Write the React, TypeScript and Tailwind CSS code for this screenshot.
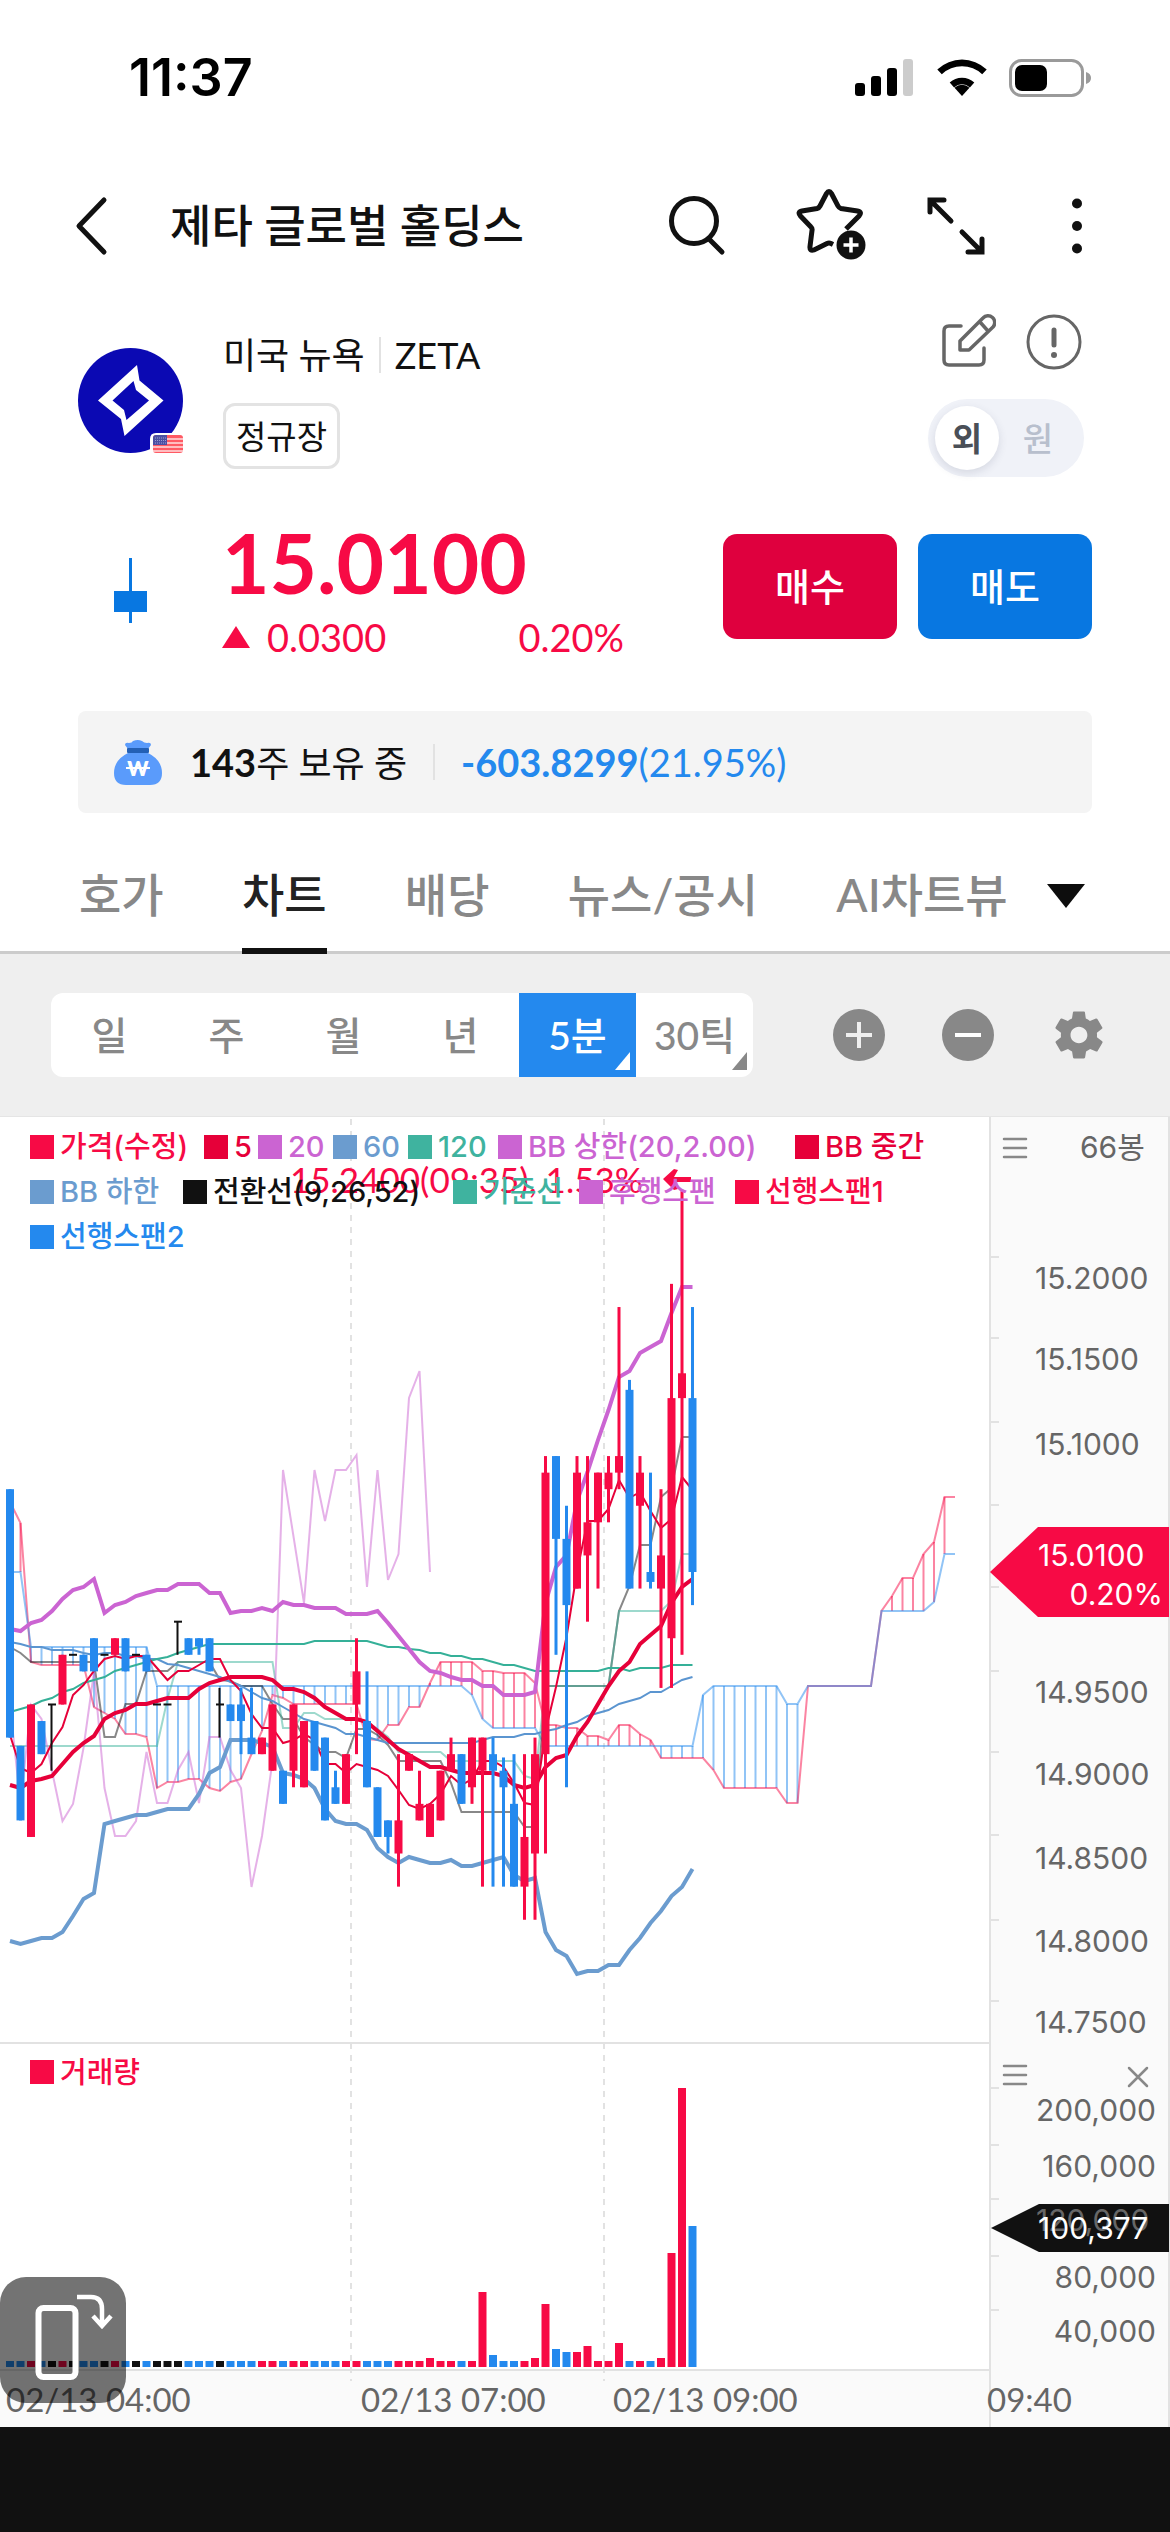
import { useState } from 'react';
import { IoMdSettings } from 'react-icons/io';

const RED = '#f70a45';
const BLUE = '#2489ee';
const BLACK = '#111111';

const STEP = 10.5;
const X0 = 10;

const xOf = (i: number) => X0 + i * STEP;
// 1센트 = 16.56px, 15.01달러 = 455px
const yOf = (cents: number) => 455 - (cents - 1501) * 16.56;

// [색, 고가, 몸통 상단, 몸통 하단, 저가] (센트)
type Candle = [string, number, number, number, number];

const candles: Candle[] = [
  ['b', 1506, 1506, 1491, 1491],
  ['b', 1490.5, 1490.5, 1486, 1486],
  ['r', 1493, 1493, 1485, 1485],
  ['b', 1492, 1492, 1490, 1490],
  ['k', 1493, 1493, 1493, 1489],
  ['r', 1496, 1496, 1493, 1493],
  ['k', 1496, 1496, 1496, 1496],
  ['b', 1496, 1496, 1495, 1495],
  ['b', 1497, 1497, 1495, 1495],
  ['k', 1496, 1496, 1496, 1496],
  ['r', 1497, 1497, 1496, 1496],
  ['b', 1497, 1497, 1495, 1495],
  ['k', 1496, 1496, 1496, 1496],
  ['b', 1496, 1496, 1495, 1495],
  ['k', 1493, 1493, 1493, 1493],
  ['k', 1493, 1493, 1493, 1493],
  ['k', 1498, 1498, 1498, 1496],
  ['b', 1497, 1497, 1496, 1496],
  ['b', 1497, 1497, 1496.5, 1496],
  ['b', 1497, 1497, 1495, 1495],
  ['k', 1494, 1493, 1493, 1491],
  ['b', 1493, 1493, 1492, 1492],
  ['b', 1494, 1493, 1492, 1490],
  ['b', 1494, 1491, 1490, 1490],
  ['r', 1491, 1491, 1490, 1490],
  ['r', 1493, 1493, 1489, 1489],
  ['b', 1489, 1489, 1487, 1487],
  ['r', 1493, 1493, 1489, 1488],
  ['r', 1492, 1492, 1488, 1488],
  ['b', 1492, 1492, 1489, 1489],
  ['b', 1491, 1491, 1486, 1486],
  ['b', 1489, 1488, 1487, 1487],
  ['r', 1490, 1490, 1487, 1487],
  ['r', 1497, 1495, 1493, 1490],
  ['b', 1495, 1492, 1488, 1488],
  ['b', 1488, 1488, 1485, 1485],
  ['b', 1486, 1486, 1485, 1484],
  ['r', 1490, 1486, 1484, 1482],
  ['r', 1490, 1490, 1489, 1489],
  ['r', 1489, 1487, 1486, 1486],
  ['r', 1487, 1487, 1485, 1485],
  ['r', 1489, 1489, 1486, 1486],
  ['r', 1491, 1490, 1489, 1489],
  ['b', 1490, 1490, 1487, 1487],
  ['r', 1491, 1491, 1488, 1487],
  ['r', 1491, 1491, 1489, 1482],
  ['b', 1491, 1490, 1489, 1482],
  ['b', 1489.8, 1489, 1488, 1482],
  ['b', 1490, 1487, 1482, 1482],
  ['r', 1490, 1485, 1482, 1480],
  ['r', 1491, 1490, 1484, 1480],
  ['r', 1508, 1507, 1490, 1484],
  ['b', 1508, 1508, 1503, 1496],
  ['b', 1505, 1503, 1499, 1488],
  ['r', 1508, 1507, 1500, 1500],
  ['r', 1508, 1504, 1502, 1498],
  ['r', 1507, 1507, 1504, 1500],
  ['r', 1508, 1507, 1506, 1504],
  ['r', 1517, 1508, 1507, 1506],
  ['b', 1512.6, 1512, 1500, 1500],
  ['r', 1508, 1507, 1505, 1500],
  ['b', 1507, 1501, 1500.4, 1500],
  ['r', 1506, 1502, 1500, 1494],
  ['r', 1518.4, 1511.5, 1497, 1494],
  ['r', 1524, 1513, 1511.5, 1496],
  ['b', 1517, 1511.5, 1501, 1499],
];

const candleColor: Record<string, string> = { r: RED, b: BLUE, k: BLACK };

// 기본 높이(6px)가 아닌 거래량 막대
const volumes: Record<number, number> = {
  40: 9, 45: 75, 46: 12, 50: 9, 51: 63, 52: 18, 53: 15, 54: 15, 55: 21,
  58: 24, 62: 9, 63: 114, 64: 279, 65: 141,
};

// "봉번호,y" 목록
const lines = {
  bbUpper:
    '0,512 1,514 2,506 3,503 4,494 5,482 6,473 7,470 8,462 9,496 10,488 11,485 12,479 13,476 14,473 15,473 16,467 18,467 19,476 20,476 21,496 22,494 23,494 24,491 25,494 26,485 27,488 28,488 29,491 31,491 32,497 34,497 35,494 36,506 37,519 38,532 39,545 40,554 41,556 42,560 43,563 44,563 45,569 46,569 47,578 49,578 50,575 51,486 52,450 53,438 54,384 55,355 56,323 57,293 58,260 59,254 60,236 61,230 62,224 63,196 64,170 65,170',
  bbMiddle:
    '0,668 1,671 2,664 3,662 4,659 5,647 6,635 7,626 8,619 9,602 10,596 11,593 12,587 13,587 14,584 15,581 17,581 18,572 19,566 20,563 21,560 24,560 25,563 26,572 27,572 28,575 29,581 30,590 31,596 32,602 33,602 34,605 35,614 36,623 37,632 38,638 39,644 40,650 41,650 42,653 43,656 46,656 47,659 48,668 49,671 50,668 51,650 52,641 53,638 54,619 55,605 56,587 57,569 58,554 59,545 60,527 61,518 62,509 63,486 64,470 65,462',
  bbLower:
    '0,824 1,827 2,824 3,821 4,821 5,815 6,799 7,782 8,776 9,707 10,704 11,701 12,698 13,698 14,695 15,692 17,692 18,677 19,656 20,650 21,623 23,623 24,626 25,630 26,656 27,658 28,662 29,671 30,692 31,704 32,707 33,707 34,713 35,731 36,740 37,746 38,740 39,743 40,746 41,746 42,743 43,749 44,749 45,746 46,743 47,740 48,758 49,764 50,761 51,815 52,833 53,839 54,857 55,854 56,854 57,848 58,848 59,833 60,821 61,806 62,794 63,779 64,770 65,752',
  ma5:
    '0,618 1,651 2,656 3,647 4,626 5,610 6,578 7,568 8,554 9,542 10,539 11,542 12,539 13,539 14,551 15,563 16,554 17,554 18,548 19,542 20,542 21,563 22,574 23,597 24,611 25,611 26,626 27,623 28,617 29,623 30,647 31,647 32,656 33,647 34,650 35,653 36,659 37,673 38,688 39,692 40,687 41,677 42,659 43,668 44,662 45,644 46,644 47,650 48,666 49,686 50,688 51,614 52,570 53,520 54,455 55,404 56,404 57,392 58,363 59,381 60,375 61,394 62,411 63,402 64,360 65,373',
  ma60:
    '0,525 1,527 2,530 3,530 4,533 6,533 7,536 8,538 9,536 10,536 11,539 12,539 13,542 14,542 15,547 16,548 17,551 18,554 19,557 20,560 21,565 22,569 23,575 24,581 25,584 26,590 27,596 28,602 29,605 30,608 31,611 32,617 33,617 34,620 35,623 36,626 44,626 45,623 46,620 48,620 49,617 50,617 51,614 52,612 53,608 54,605 55,599 56,596 57,593 58,587 59,584 60,581 61,575 62,575 63,569 64,563 65,560',
  ma120:
    '0,595 2,589 3,584 4,581 5,575 6,572 7,566 8,563 9,560 10,554 11,551 12,548 14,542 15,540 16,536 17,533 18,530 19,527 28,527 29,524 34,524 35,527 36,530 37,530 38,532 39,533 40,536 41,536 42,539 43,539 44,542 45,542 46,545 47,548 48,548 49,551 50,554 56,554 57,551 58,551 59,554 60,551 62,551 63,548 65,548',
  conversion:
    '0,530 1,536 2,545 8,545 9,620 10,620 11,587 12,587 13,554 15,554 16,545 19,545 20,563 21,564 22,569 24,569 25,587 26,602 27,602 28,620 29,628 30,635 31,635 32,641 33,612 34,612 35,618 36,628 37,644 41,644 42,666 43,695 48,695 49,710 50,710 51,569 57,569 58,494 59,469 60,428 61,428 62,380 63,371 64,320 65,320',
  base:
    '0,629 14,629 15,582 16,545 25,545 26,611 27,611 28,596 29,596 30,602 33,602 34,605 35,612 36,620 37,635 41,635 42,644 48,644 49,659 50,662 51,569 57,569 58,494 62,494 63,484 64,437 65,437',
  lagging:
    '0,588 1,687 2,588 3,602 4,654 5,704 6,687 7,631 8,555 9,671 10,719 11,719 12,704 13,635 14,686 15,686 16,653 17,635 18,686 19,620 20,620 21,653 22,671 23,770 24,719 25,644 26,353 28,486 29,353 30,404 31,353 32,353 33,338 34,470 35,353 36,463 37,437 38,281 39,254 40,455',
  spanA:
    '0,385 1,406 2,545 3,548 7,548 8,590 9,596 10,602 11,617 12,617 13,620 14,671 15,665 16,665 17,662 18,662 19,671 20,674 21,665 22,662 23,637 24,614 25,578 26,581 27,587 33,587 34,622 35,623 36,608 37,608 38,590 39,590 40,566 41,545 44,545 45,554 46,554 47,556 49,556 50,566 51,608 52,608 53,611 54,611 55,619 56,619 57,623 58,608 59,608 60,617 61,623 62,641 66,641 67,653 68,671 73,671 74,686 75,686 76,569 82,569 83,494 84,479 85,461 86,461 87,437 88,425 89,380 90,380',
  spanB:
    '0,455 1,455 2,530 13,530 14,569 43,569 44,578 45,602 46,611 50,611 51,629 65,629 66,578 67,569 73,569 74,587 75,587 76,569 82,569 83,494 87,494 88,485 89,437 90,437',
};

const parse = (s: string) => s.split(' ').map((p) => p.split(',').map(Number));
const toPoints = (s: string) => parse(s).map(([i, y]) => `${xOf(i)},${y}`).join(' ');

// 비어 있는 봉은 직선 보간
const valueAt = (s: string, i: number) => {
  const pts = parse(s);
  const next = pts.findIndex(([k]) => k >= i);
  if (pts[next][0] === i) return pts[next][1];
  const [k0, y0] = pts[next - 1];
  const [k1, y1] = pts[next];
  return y0 + ((y1 - y0) * (i - k0)) / (k1 - k0);
};

const cloud = Array.from({ length: 90 }, (_, i) => ({
  i,
  a: valueAt(lines.spanA, i),
  b: valueAt(lines.spanB, i),
}));

const priceTicks = [140, 221, 305, 388, 470, 554, 635, 718, 803, 884];
const priceLabels: [string, number][] = [
  ['15.2000', 161],
  ['15.1500', 242],
  ['15.1000', 327],
  ['14.9500', 575],
  ['14.9000', 657],
  ['14.8500', 741],
  ['14.8000', 824],
  ['14.7500', 905],
];
const volumeTicks = [971, 1028, 1082, 1139, 1193];
const volumeLabels: [string, number][] = [
  ['200,000', 993],
  ['160,000', 1049],
  ['80,000', 1160],
  ['40,000', 1214],
];

const legend = [
  [
    { label: '가격(수정)', color: 'text-[#f70a45]', width: 'w-[174px]' },
    { label: '5', color: 'text-[#e60039]', width: 'w-[54px]' },
    { label: '20', color: 'text-[#cb64d2]', width: 'w-[75px]' },
    { label: '60', color: 'text-[#6b9ccf]', width: 'w-[75px]' },
    { label: '120', color: 'text-[#3fb39f]', width: 'w-[90px]' },
    { label: 'BB 상한(20,2.00)', color: 'text-[#cb64d2]', width: 'w-[297px]' },
    { label: 'BB 중간', color: 'text-[#e60039]', width: 'w-[153px]' },
  ],
  [
    { label: 'BB 하한', color: 'text-[#6b9ccf]', width: 'w-[153px]' },
    { label: '전환선(9,26,52)', color: 'text-[#111111]', width: 'w-[270px]' },
    { label: '기준선', color: 'text-[#3fb39f]', width: 'w-[126px]' },
    { label: '후행스팬', color: 'text-[#cb64d2]', width: 'w-[156px]' },
    { label: '선행스팬1', color: 'text-[#f70a45]', width: 'w-[174px]' },
  ],
  [{ label: '선행스팬2', color: 'text-[#2489ee]', width: 'w-[174px]' }],
];

const tabs = ['호가', '차트', '배당', '뉴스/공시', 'AI차트뷰'];
const periods = ['일', '주', '월', '년', '5분', '30틱'];

function StatusBar() {
  return (
    <div className="flex h-[156px] items-center justify-between pr-[78px] pl-[129px]">
      <span className="font-['Inter',sans-serif] text-[52px] leading-none font-semibold text-black">11:37</span>
      <div className="flex items-center gap-[22px]">
        <svg className="h-[38px] w-[60px]" viewBox="0 0 60 38">
          <rect x="0" y="24" width="10" height="13" rx="3" />
          <rect x="16" y="17" width="10" height="20" rx="3" />
          <rect x="32" y="9" width="10" height="28" rx="3" />
          <rect x="48" y="0" width="10" height="37" rx="3" fill="#cccccc" />
        </svg>
        <svg className="h-[38px] w-[50px]" viewBox="0 0 50 38">
          <path d="M25 37l-7.5-8.2a11 11 0 0 1 15 0z" />
          <path d="M12.7 23.6a18 18 0 0 1 24.6 0l-4.4 4.8a11.6 11.6 0 0 0-15.8 0z" />
          <path d="M4.8 15.2L.3 10.4a36 36 0 0 1 49.4 0l-4.5 4.8a29.5 29.5 0 0 0-40.4 0z" />
        </svg>
        <svg className="h-[38px] w-[83px]" viewBox="0 0 83 38">
          <rect x="1.5" y="1.5" width="72" height="35" rx="11" fill="none" stroke="#9a9a9a" strokeWidth="3" />
          <rect x="6" y="6" width="32" height="26" rx="7" />
          <path d="M77 13q5 1.500 5 6t-5 6z" fill="#9a9a9a" />
        </svg>
      </div>
    </div>
  );
}

function Header() {
  return (
    <header className="flex h-[140px] items-center pr-[86px] pl-[72px]">
      <button aria-label="뒤로" className="mr-[62px]">
        <svg className="h-[60px] w-[36px]" viewBox="0 0 36 60" fill="none" stroke="#111" strokeWidth="5" strokeLinecap="round" strokeLinejoin="round">
          <path d="M32 4L7 30l25 26" />
        </svg>
      </button>
      <h1 className="flex-1 text-[45px] leading-[60px] font-medium text-[#111111]">제타 글로벌 홀딩스</h1>
      <div className="flex items-center gap-[54px]">
        <button aria-label="검색" className="mr-[15px]">
          <svg className="h-[70px] w-[60px]" viewBox="0 0 60 70" fill="none" stroke="#111" strokeWidth="5" strokeLinecap="round">
            <circle cx="27" cy="30" r="22.500" />
            <path d="M42 48l13 13" />
          </svg>
        </button>
        <button aria-label="관심종목 추가">
          <svg className="h-[76px] w-[76px]" viewBox="0 0 76 76" fill="none">
            <path
              d="M50 41l13-13q3.500-4-1.500-5l-16.500-2.500q-2-.5-3-2.500l-6.500-12.500q-2.500-4-5 0l-6.500 12.500q-1 2-3 2.500l-15 2.500q-5 1-1.500 5l10.500 11q1.500 1.500 1 3.500l-2 16q-.5 5 4 3.500l13-6.500q2-1 4 0l2 1"
              stroke="#111"
              strokeWidth="5"
            />
            <circle cx="55" cy="57" r="14.500" fill="#111" />
            <path d="M55 49.500v15M47.500 57h15" stroke="#fff" strokeWidth="3.500" />
          </svg>
        </button>
        <button aria-label="전체화면">
          <svg className="h-[70px] w-[60px]" viewBox="0 0 60 70" fill="none" stroke="#111" strokeWidth="5" strokeLinecap="round">
            <path d="M4 21V9h14M5 10l20 20M56 48v13H42M55 60L36 41" />
          </svg>
        </button>
        <button aria-label="더보기" className="ml-[30px]">
          <svg className="h-[60px] w-[14px]" viewBox="0 0 14 60" fill="#111">
            <circle cx="7" cy="7.500" r="5" />
            <circle cx="7" cy="30" r="5" />
            <circle cx="7" cy="52.500" r="5" />
          </svg>
        </button>
      </div>
    </header>
  );
}

function CompanyLogo() {
  return (
    <svg className="h-[108px] w-[106px]" viewBox="0 0 106 108">
      <circle cx="52.500" cy="52.500" r="52.500" fill="#0b09b3" />
      <path
        d="M20 52.500L59 17l2.500 15.500L85.500 52.500 46.500 88 43 71zM34.500 52.500L46 62l2.500 10L71 52.500 58 42l-2.500-9z"
        fill="#fff"
        fillRule="evenodd"
      />
      <path d="M72 108V91q0-6 6-6h28v23z" fill="#fff" />
      <g>
        <rect x="75" y="87" width="30" height="18" rx="3" fill="#ff5a64" />
        <path d="M75 91h30M75 95h30M75 99h30M75 103h30" stroke="#ffdede" strokeWidth="1.500" />
        <path d="M78 87h11v10H75v-7q0-3 3-3z" fill="#4b4fa3" />
        <path d="M77 90h11M77 92.500h11M77 95h11" stroke="#9a9cd0" strokeDasharray="1 1" />
      </g>
    </svg>
  );
}

function StockInfo() {
  const [currency, setCurrency] = useState('외');

  return (
    <section className="flex items-start px-[78px] pt-[18px]">
      <div className="mt-[34px] mr-[39px]">
        <CompanyLogo />
      </div>
      <div className="flex-1 pt-[17px]">
        <div className="flex items-center gap-[14px] text-[36px] leading-[48px] text-[#111111]">
          <span>미국 뉴욕</span>
          <span className="h-[36px] w-[2px] bg-[#e2e2e2]" />
          <span>ZETA</span>
        </div>
        <div className="mt-6 flex">
          <span className="rounded-xl border-[3px] border-[#e3e3e3] px-[10px] text-[33px] leading-[60px] text-[#111111]">정규장</span>
        </div>
      </div>
      <div className="flex flex-col items-end pr-2">
        <div className="flex gap-[30px]">
          <button aria-label="메모">
            <svg className="h-[58px] w-[56px]" viewBox="0 0 56 58" fill="none" stroke="#666" strokeWidth="3.500" strokeLinecap="round" strokeLinejoin="round">
              <path d="M21 12H9q-5 0-5 5v29q0 5 5 5h30q5 0 5-5V34" />
              <path d="M20 36v-9L43 4a6 6 0 0 1 10 9L29 36zM40 8l8 9" />
            </svg>
          </button>
          <button aria-label="유의사항">
            <svg className="h-[58px] w-[58px]" viewBox="0 0 58 58" fill="none" stroke="#666" strokeWidth="3">
              <circle cx="28" cy="28" r="26" />
              <path d="M28 16v15" strokeWidth="5" strokeLinecap="round" />
              <circle cx="28" cy="41" r="3" fill="#666" stroke="none" />
            </svg>
          </button>
        </div>
        <div className="mt-[27px] flex rounded-full bg-[#f0f2f8] p-[7px] text-[33px] leading-[64px]">
          {['외', '원'].map((c) => (
            <button
              key={c}
              onClick={() => setCurrency(c)}
              className={`h-16 rounded-full ${
                currency === c
                  ? 'w-16 bg-white font-bold text-[#4a4f57] shadow-[0_3px_8px_rgba(60,70,100,0.15)]'
                  : 'w-[78px] font-medium text-[#b8bfcd]'
              }`}
            >
              {c}
            </button>
          ))}
        </div>
      </div>
    </section>
  );
}

function PriceSection() {
  return (
    <section className="mt-[50px] flex items-start px-[78px]">
      <svg className="mt-[30px] mr-[39px] h-[70px] w-[105px]" viewBox="0 0 105 70">
        <path d="M51 1h3v65h-3z" fill="#0877e1" />
        <rect x="36" y="34" width="33" height="21" fill="#0877e1" />
      </svg>
      <div className="flex-1 text-[#f70a45]">
        <p className="text-[82px] leading-[70px] font-bold">15.0100</p>
        <div className="mt-4 flex w-[402px] items-center text-[38px] leading-[48px]">
          <svg className="mr-[17px] h-[22px] w-[28px]" viewBox="0 0 28 22" fill="#f70a45">
            <path d="M14 0l14 22H0z" />
          </svg>
          <span>0.0300</span>
          <span className="ml-auto">0.20%</span>
        </div>
      </div>
      <div className="mt-[7px] flex gap-[21px] text-[38px] font-medium text-white">
        <button className="h-[105px] w-[174px] rounded-[14px] bg-[#df003e]">매수</button>
        <button className="h-[105px] w-[174px] rounded-[14px] bg-[#0877e1]">매도</button>
      </div>
    </section>
  );
}

function Holding() {
  return (
    <section className="mx-[78px] mt-[50px] flex h-[102px] items-center rounded-lg bg-[#f4f4f4] px-9 text-[38px] leading-[48px]">
      <svg className="mr-[28px] h-[48px] w-[48px]" viewBox="0 -2 48 48">
        <path d="M14 9l-3-4q0-3 4-2 3 0 4-2 5-2 9 0 2 2 5 2 4-1 4 2l-3 4v4q14 7 14 20 0 12-12 12H12Q0 45 0 33 0 20 14 13z" fill="#5a9bfb" />
        <rect x="13" y="8" width="22" height="5" rx="1" fill="#2360b5" />
        <text x="24" y="36" textAnchor="middle" fontSize="20" fontWeight="800" fontFamily="Lato" fill="#fff">W</text>
        <path d="M12 28h24" stroke="#fff" strokeWidth="2" />
      </svg>
      <p className="text-[#111111]">
        <b>143</b>
        <span className="text-[36px]">주 보유 중</span>
      </p>
      <span className="mx-[26px] h-[36px] w-[2px] bg-[#e2e2e2]" />
      <p className="text-[#2489ee]">
        <b>-603.8299</b>(21.95%)
      </p>
    </section>
  );
}

function Tabs() {
  const [active, setActive] = useState('차트');

  return (
    <nav className="flex items-end justify-between pt-[27px] pr-[84px] pl-[79px] shadow-[inset_0_-3px_0_#cccccc]">
      {tabs.map((tab) => (
        <button
          key={tab}
          onClick={() => setActive(tab)}
          className={`h-[114px] border-b-[6px] text-[46px] font-medium ${
            active === tab ? 'border-[#111111] text-[#222222]' : 'border-transparent text-[#888888]'
          }`}
        >
          {tab}
        </button>
      ))}
      <button aria-label="탭 더보기" className="mb-[45px] -ml-[40px]">
        <svg className="h-[26px] w-[40px]" viewBox="0 0 40 26">
          <path d="M1 1h38L20 25z" fill="#0d0d0d" />
        </svg>
      </button>
    </nav>
  );
}

function Toolbar() {
  const [period, setPeriod] = useState('5분');

  return (
    <div className="flex items-center justify-between border-b border-[#e5e5e5] bg-[#efefef] py-[39px] pr-[62px] pl-[51px]">
      <div className="flex overflow-hidden rounded-xl bg-white">
        {periods.map((p) => (
          <button
            key={p}
            onClick={() => setPeriod(p)}
            className={`relative h-[84px] w-[117px] text-[39px] font-medium ${
              period === p ? 'bg-[#2489ee] text-white' : 'text-[#888888]'
            }`}
          >
            {p}
            {(p === '5분' || p === '30틱') && (
              <svg className="absolute right-[6px] bottom-[7px] h-[18px] w-[15px]" viewBox="0 0 15 18" fill="currentColor">
                <path d="M15 0v18H0z" />
              </svg>
            )}
          </button>
        ))}
      </div>
      <div className="flex items-center gap-[55px]">
        <button aria-label="확대">
          <svg className="h-[54px] w-[54px]" viewBox="0 0 54 54">
            <circle cx="27" cy="27" r="26" fill="#888" />
            <path d="M14 27h26M27 14v26" stroke="#efefef" strokeWidth="4" />
          </svg>
        </button>
        <button aria-label="축소">
          <svg className="h-[54px] w-[54px]" viewBox="0 0 54 54">
            <circle cx="27" cy="27" r="26" fill="#888" />
            <path d="M14 27h26" stroke="#fff" strokeWidth="4" />
          </svg>
        </button>
        <button aria-label="차트 설정">
          <IoMdSettings className="h-[58px] w-[58px] text-[#888888]" />
        </button>
      </div>
    </div>
  );
}

function ChartCanvas() {
  return (
    <svg className="block w-full" viewBox="0 0 1170 1310" role="img" aria-label="5분봉 차트">
      <rect width="1170" height="1310" fill="#fff" />
      <rect x="991" width="179" height="1310" fill="#fafafa" />
      <rect y="1254" width="991" height="56" fill="#fafafa" />

      {/* 격자 */}
      <g stroke="#e2e2e2" strokeWidth="2" fill="none">
        <path d="M351 2v1262M604 2v1262" strokeDasharray="6 6" />
        <path d="M0 926h990M0 1253h990M990 0v1310M1169 0v1310" />
        {[...priceTicks, ...volumeTicks].map((y) => (
          <path key={y} d={`M991 ${y}h8`} />
        ))}
      </g>

      <g fill={RED} fontFamily="Lato, sans-serif" fontSize="35">
        <text x="290" y="76">15.2400(09:35), 1.53%</text>
        <path d="M691 60v5h-17l4 7-4 1-11-11 11-10 4 1-4 7z" />
      </g>

      {/* 일목균형표 구름 */}
      <g strokeWidth="2" strokeOpacity="0.5" fill="none">
        {cloud
          .filter(({ a, b }) => a !== b)
          .map(({ i, a, b }) => (
            <path key={i} d={`M${xOf(i)} ${a}V${b}`} stroke={a < b ? RED : BLUE} />
          ))}
        <polyline points={toPoints(lines.spanA)} stroke={RED} />
        <polyline points={toPoints(lines.spanB)} stroke={BLUE} />
        <polyline points={toPoints(lines.conversion)} stroke={BLACK} />
        <polyline points={toPoints(lines.base)} stroke="#3bb39c" />
        <polyline points={toPoints(lines.lagging)} stroke="#cb64d2" />
      </g>

      {/* 이동평균, 볼린저밴드 */}
      <g fill="none" strokeWidth="2">
        <polyline points={toPoints(lines.ma60)} stroke="#5b95d0" />
        <polyline points={toPoints(lines.ma120)} stroke="#35b098" />
        <polyline points={toPoints(lines.ma5)} stroke="#e60039" />
        <g strokeWidth="4">
          <polyline points={toPoints(lines.bbUpper)} stroke="#cb64d2" />
          <polyline points={toPoints(lines.bbMiddle)} stroke="#e60039" />
          <polyline points={toPoints(lines.bbLower)} stroke="#6b9ccf" />
        </g>
      </g>

      {candles.map(([c, high, top, bottom, low], i) => {
        const height = Math.max(yOf(bottom) - yOf(top), 2);
        return (
          <g key={i} fill={candleColor[c]}>
            {high !== low && <rect x={xOf(i) - 1.5} y={yOf(high)} width={c === 'k' ? 2 : 3} height={yOf(low) - yOf(high)} />}
            <rect x={xOf(i) - 4} y={top === bottom ? yOf(top) - 1 : yOf(top)} width="8" height={height} />
          </g>
        );
      })}

      {candles.map(([c], i) => {
        const height = volumes[i] ?? 6;
        return <rect key={i} x={xOf(i) - 4} y={1250 - height} width="8" height={height} fill={candleColor[c]} />;
      })}

      {/* 가격축, 거래량축 */}
      <g fontFamily="Inter, 'Noto Sans CJK KR', sans-serif" fontSize="30" fill="#666">
        <text x="1080" y="41">66봉</text>
        {priceLabels.map(([label, y]) => (
          <text key={label} x="1035" y={y + 11}>{label}</text>
        ))}
        {volumeLabels.map(([label, y]) => (
          <text key={label} x="1156" y={y + 11} textAnchor="end">{label}</text>
        ))}
        <path d="M990 455l48-45h131v90h-131z" fill={RED} />
        <text x="1038" y="449" fill="#fff">15.0100</text>
        <text x="1163" y="488" textAnchor="end" fill="#fff">0.20%</text>
        <path d="M991 1111l48-24h130v48h-130z" fill={BLACK} />
        <text x="1036" y="1114">120,000</text>
        <text x="1038" y="1122" fill="#fff">100,377</text>
      </g>

      {/* 시간축 */}
      <g fontFamily="Lato, sans-serif" fontSize="33" fill="#666">
        <text x="6" y="1295">02/13 04:00</text>
        <text x="361" y="1295">02/13 07:00</text>
        <text x="613" y="1295">02/13 09:00</text>
        <text x="987" y="1295">09:40</text>
      </g>
    </svg>
  );
}

function MenuIcon() {
  return (
    <svg className="h-[24px] w-[26px]" viewBox="0 0 26 24" stroke="#888" strokeWidth="2.500" strokeLinecap="round">
      <path d="M2 3h22M2 12h22M2 21h22" />
    </svg>
  );
}

function Chart() {
  return (
    <div className="relative">
      <ChartCanvas />

      <div className="absolute top-[7px] left-[30px] font-['Inter','Noto_Sans_CJK_KR',sans-serif] text-[29px] leading-[45px] font-medium">
        {legend.map((row, i) => (
          <ul key={i} className="flex">
            {row.map(({ label, color, width }) => (
              <li key={label} className={`flex items-center gap-[6px] whitespace-nowrap ${color} ${width}`}>
                <span className="size-6 shrink-0 bg-current" />
                {label}
              </li>
            ))}
          </ul>
        ))}
      </div>
      <div className="absolute top-[932px] left-[30px] flex items-center gap-[6px] text-[29px] leading-[45px] font-medium text-[#f70a45]">
        <span className="size-6 bg-current" />
        거래량
      </div>

      <button aria-label="가격 차트 메뉴" className="absolute top-[19px] right-[142px]">
        <MenuIcon />
      </button>
      <button aria-label="거래량 차트 메뉴" className="absolute top-[946px] right-[142px]">
        <MenuIcon />
      </button>
      <button aria-label="거래량 차트 닫기" className="absolute top-[948px] right-[20px]">
        <svg className="h-[24px] w-[24px]" viewBox="0 0 24 24" stroke="#888" strokeWidth="2.500" strokeLinecap="round">
          <path d="M3 3l18 18M21 3L3 21" />
        </svg>
      </button>

      <button aria-label="가로 화면" className="absolute bottom-[24px] left-0 rounded-[26px] bg-black/55">
        <svg className="h-[126px] w-[126px]" viewBox="0 0 126 126" fill="none" stroke="#fff">
          <rect x="38.500" y="31" width="37" height="69" rx="5" strokeWidth="6" />
          <path d="M77 20h14q11 0 11 12v16M93 39l9 10 9-10" strokeWidth="4.500" />
        </svg>
      </button>
    </div>
  );
}

export default function App() {
  return (
    <div className="flex min-h-screen flex-col bg-white font-['Lato','Noto_Sans_CJK_KR',sans-serif]">
      <StatusBar />
      <Header />
      <StockInfo />
      <PriceSection />
      <Holding />
      <Tabs />
      <Toolbar />
      <Chart />
      <footer className="min-h-[105px] flex-1 bg-[#111111]" />
    </div>
  );
}
